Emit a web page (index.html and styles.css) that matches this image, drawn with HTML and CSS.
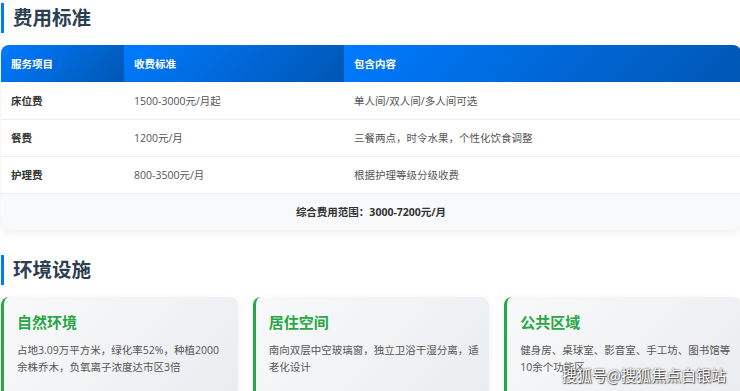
FILE: index.html
```html
<!DOCTYPE html>
<html lang="zh-CN">
<head>
<meta charset="UTF-8">
<title>费用标准</title>
<link rel="stylesheet" href="styles.css">
</head>
<body>
<div class="page">
	<h2 class="sec-title">费用标准</h2>
	<div class="fee-box">
		<table class="fee-table">
			<tr>
				<th class="c1">服务项目</th>
				<th class="c2">收费标准</th>
				<th class="c3">包含内容</th>
			</tr>
			<tr>
				<td class="item">床位费</td>
				<td>1500-3000元/月起</td>
				<td>单人间/双人间/多人间可选</td>
			</tr>
			<tr>
				<td class="item">餐费</td>
				<td>1200元/月</td>
				<td>三餐两点，时令水果，个性化饮食调整</td>
			</tr>
			<tr>
				<td class="item">护理费</td>
				<td>800-3500元/月</td>
				<td>根据护理等级分级收费</td>
			</tr>
			<tr>
				<td colspan="3" class="total">综合费用范围：3000-7200元/月</td>
			</tr>
		</table>
	</div>

	<h2 class="sec-title">环境设施</h2>
	<div class="cards">
		<div class="card">
			<h3>自然环境</h3>
			<p>占地3.09万平方米，绿化率52%，种植2000余株乔木，负氧离子浓度达市区3倍</p>
		</div>
		<div class="card">
			<h3>居住空间</h3>
			<p>南向双层中空玻璃窗，独立卫浴干湿分离，适老化设计</p>
		</div>
		<div class="card">
			<h3>公共区域</h3>
			<p>健身房、桌球室、影音室、手工坊、图书馆等10余个功能区</p>
		</div>
	</div>
</div>
<div class="watermark">搜狐号@搜狐焦点白银站</div>
</body>
</html>
```

FILE: styles.css
```css
* { box-sizing: border-box; }
html, body { margin: 0; padding: 0; height: 100%; overflow: hidden; background: #fff; }
body { font-family: "Open Sans", "Noto Sans CJK SC", sans-serif; color: #333; position: relative; }
.page { width: 740px; margin-left: 1px; padding-top: 3px; }

.sec-title { margin: 0 0 12px 0; padding-left: 9px; border-left: 3px solid #007bff; font-size: 19.5px; line-height: 30px; font-weight: bold; color: #2c3e50; }

.fee-box { border-radius: 8px; overflow: hidden; background: #fff; box-shadow: 0 2px 10px rgba(0,0,0,0.08); margin-bottom: 25px; }
.fee-table { width: 100%; border-collapse: collapse; font-size: 10.5px; }
.fee-table th { height: 37px; padding: 0 10px; text-align: left; color: #fff; font-weight: bold; background: linear-gradient(135deg, #007bff, #0056b3); }
.fee-table .c1 { width: 123px; }
.fee-table .c2 { width: 220px; }
.fee-table td { height: 37px; padding: 0 10px; color: #555; border-bottom: 1px solid #eee; }
.fee-table td.item { color: #333; font-weight: bold; }
.fee-table td.total { text-align: center; background: #f8f9fa; color: #333; font-weight: bold; border-bottom: none; }

.cards { display: grid; grid-template-columns: repeat(3, 1fr); gap: 15px; }
.card { background: linear-gradient(135deg, #f8f9fa, #e9ecef); border-left: 3px solid #28a745; border-radius: 8px; padding: 15px 10px 15px 13px; box-shadow: 0 2px 8px rgba(0,0,0,0.06); min-height: 110px; }
.card h3 { margin: 0 0 10px 0; font-size: 15px; line-height: 20px; color: #28a745; font-weight: bold; }
.card p { margin: 0; font-size: 10.5px; line-height: 17px; color: #555; }

.watermark { position: absolute; right: 14px; bottom: 6px; font-family: "Noto Sans CJK SC", sans-serif; font-size: 15px; line-height: 20px; color: #fff; text-shadow: 0 0 2px rgba(0,0,0,0.8), 1px 1px 1px rgba(0,0,0,0.6); }
```
